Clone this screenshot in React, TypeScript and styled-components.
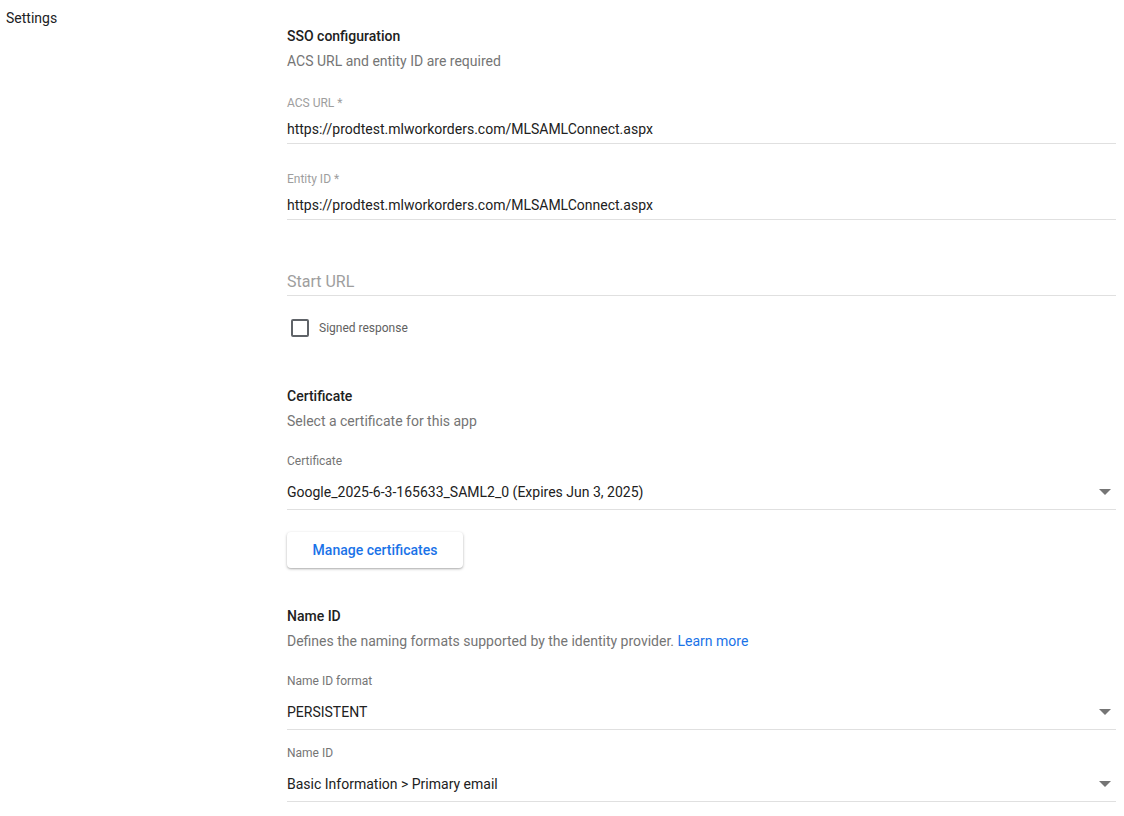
import styled, { createGlobalStyle } from 'styled-components'

const Global = createGlobalStyle`
   html, body {
      margin: 0;
      padding: 0;
      background: #fff;
      font-family: Roboto, "Liberation Sans", Arial, sans-serif;
      color: #212121;
   }
`

const Page = styled.div`
   display: flex;
   width: 1124px;
   min-height: 816px;
`

const SideTitle = styled.div`
   width: 281px;
   padding: 8px 0 0 6px;
   font-size: 14px;
   line-height: 20px;
   color: #202124;
   flex-shrink: 0;
`

const Content = styled.div`
   width: 829px;
   padding-top: 26px;
   display: flex;
   flex-direction: column;
`

const Heading = styled.div<{ $top?: number }>`
   margin-top: ${(p) => p.$top ?? 0}px;
   font-size: 14px;
   font-weight: 500;
   line-height: 20px;
   color: #212121;
`

const Hint = styled.div`
   margin-top: 5px;
   font-size: 14px;
   line-height: 20px;
   color: #757575;

   a {
      color: #1a73e8;
      text-decoration: none;
   }
`

const Field = styled.div<{ $top: number }>`
   margin-top: ${(p) => p.$top}px;
   display: flex;
   flex-direction: column;
`

const FieldLabel = styled.div<{ $light?: boolean }>`
   height: 16px;
   font-size: 12px;
   line-height: 16px;
   color: ${(p) => (p.$light ? '#9e9e9e' : '#757575')};
`

const FieldValue = styled.div<{ $select?: boolean; $placeholder?: boolean }>`
   margin-top: ${(p) => (p.$select ? 13 : p.$placeholder ? 9 : 8)}px;
   padding-bottom: ${(p) => (p.$select ? 7 : p.$placeholder ? 3 : 4)}px;
   border-bottom: 1px solid #e0e0e0;
   font-size: ${(p) => (p.$placeholder ? 16 : 14)}px;
   line-height: 20px;
   color: ${(p) => (p.$placeholder ? '#9e9e9e' : '#212121')};
   display: flex;
   align-items: center;
   justify-content: space-between;
`

const Arrow = styled.span`
   width: 0;
   height: 0;
   margin-right: 5px;
   border-left: 6px solid transparent;
   border-right: 6px solid transparent;
   border-top: 6px solid #757575;
`

const CheckRow = styled.label`
   margin-top: 23px;
   display: flex;
   align-items: center;
   gap: 10px;
   padding-left: 4px;
   font-size: 12px;
   color: #616161;
`

const Box = styled.span`
   width: 18px;
   height: 18px;
   box-sizing: border-box;
   border: 2px solid #5f6368;
   border-radius: 2px;
`

const Button = styled.button`
   margin-top: 22px;
   align-self: flex-start;
   width: 176px;
   height: 36px;
   border: none;
   border-radius: 4px;
   background: #fff;
   box-shadow: 0 1px 3px rgba(0, 0, 0, 0.28), 0 1px 1px rgba(0, 0, 0, 0.08);
   font-family: inherit;
   font-size: 14px;
   font-weight: 500;
   color: #1a73e8;
   cursor: pointer;
`

const Select = ({ label, value, top }: { label: string; value: string; top: number }) => (
   <Field $top={top}>
      <FieldLabel>{label}</FieldLabel>
      <FieldValue $select>
         <span>{value}</span>
         <Arrow />
      </FieldValue>
   </Field>
)

const App = () => {
   const url = 'https://prodtest.mlworkorders.com/MLSAMLConnect.aspx'
   return (
      <Page>
         <Global />
         <SideTitle>Settings</SideTitle>
         <Content>
            <Heading>SSO configuration</Heading>
            <Hint>ACS URL and entity ID are required</Hint>

            <Field $top={24}>
               <FieldLabel $light>ACS URL *</FieldLabel>
               <FieldValue>{url}</FieldValue>
            </Field>
            <Field $top={27}>
               <FieldLabel $light>Entity ID *</FieldLabel>
               <FieldValue>{url}</FieldValue>
            </Field>
            <Field $top={27}>
               <FieldLabel />
               <FieldValue $placeholder>Start URL</FieldValue>
            </Field>

            <CheckRow>
               <Box />
               Signed response
            </CheckRow>

            <Heading $top={49}>Certificate</Heading>
            <Hint>Select a certificate for this app</Hint>
            <Select
               top={22}
               label="Certificate"
               value="Google_2025-6-3-165633_SAML2_0 (Expires Jun 3, 2025)"
            />
            <Button>Manage certificates</Button>

            <Heading $top={38}>Name ID</Heading>
            <Hint>
               Defines the naming formats supported by the identity provider. <a href="#">Learn more</a>
            </Hint>
            <Select top={22} label="Name ID format" value="PERSISTENT" />
            <Select top={15} label="Name ID" value="Basic Information > Primary email" />
         </Content>
      </Page>
   )
}

export default App
